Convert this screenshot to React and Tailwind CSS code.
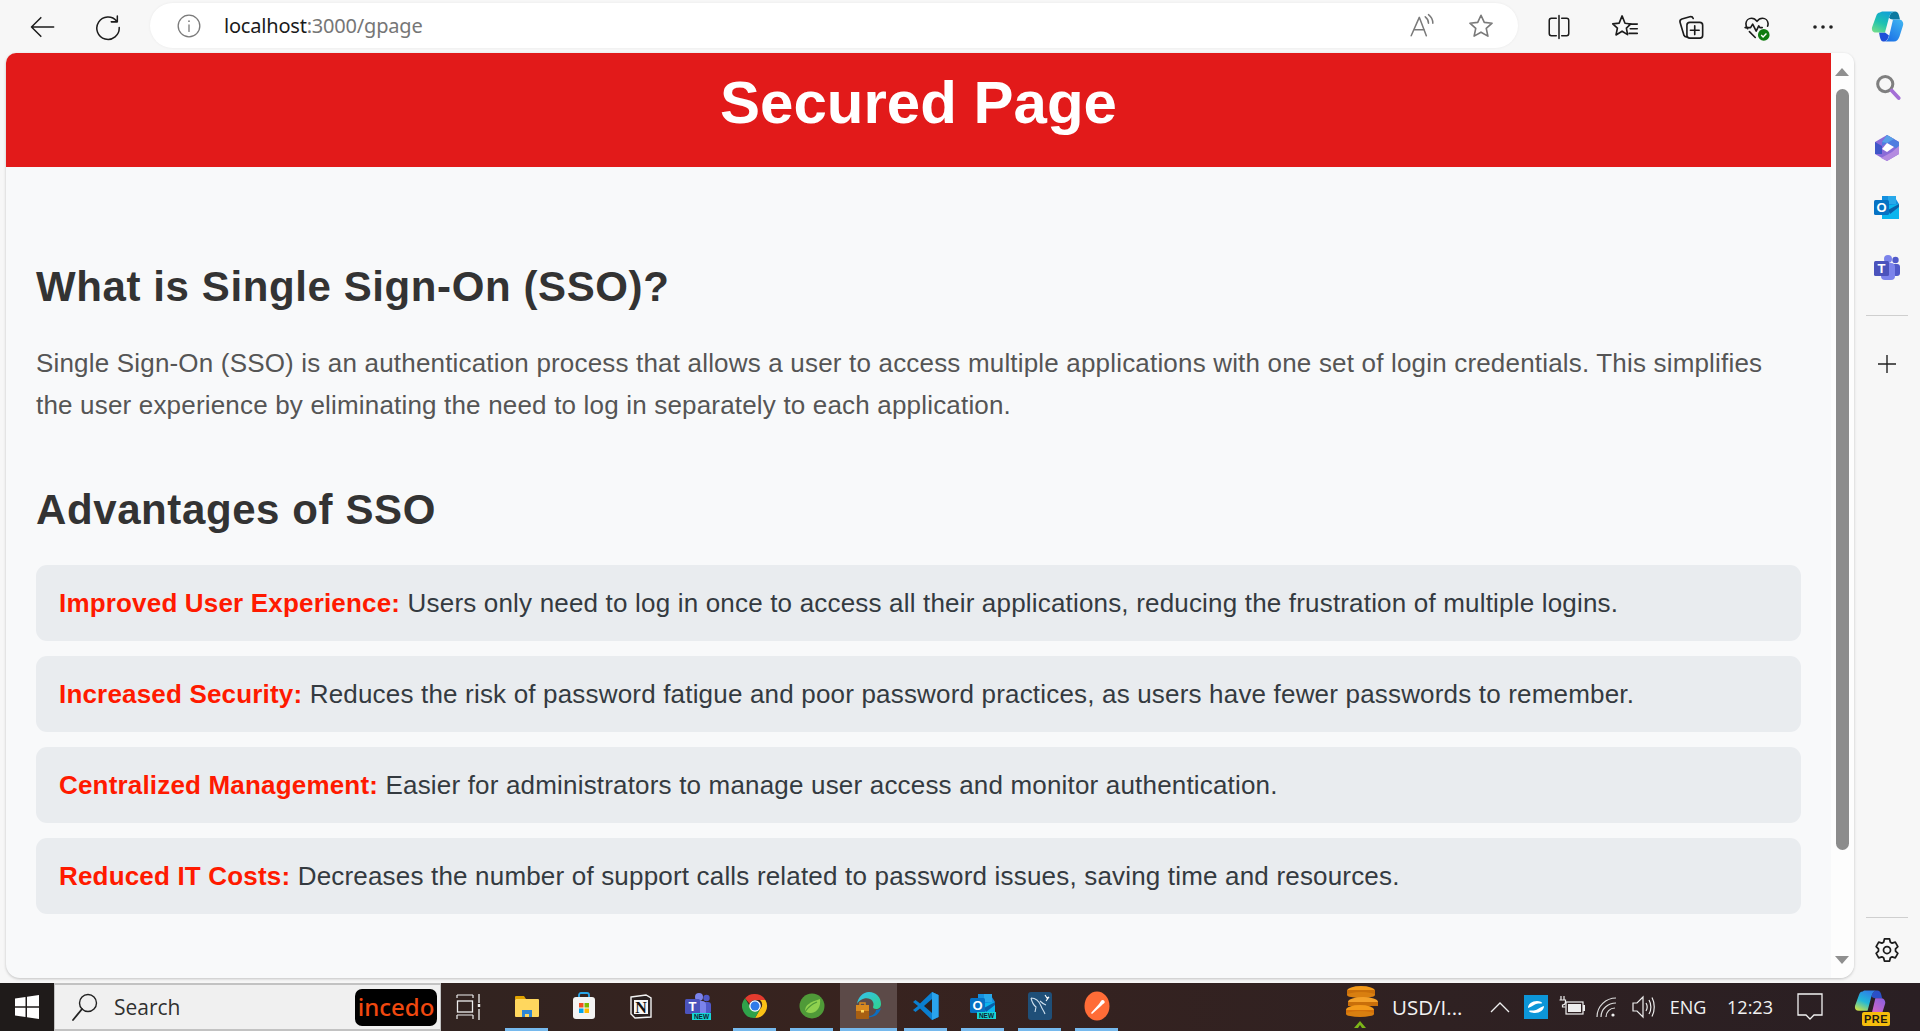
import React from "react";

const Slot = ({ w = "w-[66px]", children }) => (
  <div className={`${w} h-full flex items-center justify-center shrink-0`}>{children}</div>
);

const S = ({ size = 26, vb = 24, children, className = "" }) => (
  <svg width={size} height={size} viewBox={`0 0 ${vb} ${vb}`} fill="none" className={className}>{children}</svg>
);

const ic = { stroke: "#1c1c1c", strokeWidth: 1.4, strokeLinecap: "round", strokeLinejoin: "round" };
const ig = { stroke: "#7a7a7a", strokeWidth: 1.4, strokeLinecap: "round", strokeLinejoin: "round" };

const Back = () => <S size={28}><path d="M22 12H3M11 4l-8 8 8 8" {...ic} strokeWidth={1.3} /></S>;
const Reload = () => <S size={28}><path d="M19.5 7A9.6 9.6 0 1 0 21.6 12.5M20 2.5V7.6h-5.2" {...ic} strokeWidth={1.3} /></S>;
const Info = () => <S size={26}><circle cx="12" cy="12" r="10" {...ig} strokeWidth={1.2} /><path d="M12 11v6" {...ig} strokeWidth={1.2} /><circle cx="12" cy="7.6" r=".8" fill="#7a7a7a" /></S>;
const ReadAloud = () => <S size={26}><path d="M2 21 9.5 4 16 21M4.6 15.5h9.5" {...ig} /><path d="M15 3.5c2 1.5 3 3.6 3 6M18 1.5c2.6 2 4 4.6 4 8" {...ig} /></S>;
const StarI = () => <S size={28}><path d="m12 2.8 2.8 6.1 6.7.7-5 4.5 1.4 6.6L12 17.3l-5.9 3.4 1.4-6.6-5-4.5 6.700-.7z" {...ig} /></S>;
const Split = () => <S size={26}><path d="M9.5 4H5a2 2 0 0 0-2 2v12a2 2 0 0 0 2 2h4.5M14.5 4H19a2 2 0 0 1 2 2v12a2 2 0 0 1-2 2h-4.5M12 1.5v21" {...ic} /></S>;
const Favs = () => <S size={28}><path d="M9.500 2.500 12 8.800l5 .6-3.800 3.600 1 5.500L9.500 15.600 4.300 18.800l1.200-5.800L1.500 9.300l5.500-.6z" {...ic} /><path d="M15.500 9.500h7M16.500 13.500h6M15.500 17.500h7" {...ic} /></S>;
const Coll = () => <S size={28}><path d="M9 20.5H8c-.9 0-1.600-.5-2-1.300L2.600 8c-.3-1.300.4-2.500 1.600-2.900L11 3.200c1.300-.3 2.500.4 2.900 1.500" {...ic} /><rect x="8.5" y="8" width="13.5" height="13.5" rx="2.500" {...ic} /><path d="M15.200 11v7.500M11.500 14.800H19" {...ic} /></S>;
const Health = () => (
  <S size={28}>
    <path d="M4 13.500C2.800 12 2.400 10.500 2.500 9c.2-2.500 2.300-4.500 4.800-4.500 1.900 0 3.500 1 4.700 2.700 1.200-1.700 2.800-2.700 4.700-2.700 2.500 0 4.600 2 4.800 4.500 0 .8 0 1.500-.4 2.300" {...ic} />
    <path d="M1.800 12.500h4.700l1.800-3 3 6 2.200-4.500 1 1.500h2M5.500 16l5 5" {...ic} />
    <circle cx="17.800" cy="18.800" r="5" fill="#107c10" />
    <path d="m15.600 18.900 1.600 1.600 2.900-3" stroke="#fff" strokeWidth="1.200" />
  </S>
);
const Dots = () => <svg width="22" height="6" viewBox="0 0 22 6"><circle cx="3" cy="3" r="1.800" fill="#222" /><circle cx="11" cy="3" r="1.800" fill="#222" /><circle cx="19" cy="3" r="1.800" fill="#222" /></svg>;

const CopilotShape = ({ size, id, left, right, top, bottom }) => (
  <svg width={size} height={size} viewBox="0 0 33 32">
    <defs>
      <linearGradient id={`${id}l`} x1="0.700" y1="0" x2="0.200" y2="1"><stop offset="0" stopColor={left[0]} /><stop offset="0.550" stopColor={left[1]} /><stop offset="1" stopColor={left[2]} /></linearGradient>
      <linearGradient id={`${id}r`} x1="0.900" y1="0" x2="0.200" y2="1"><stop offset="0" stopColor={right[0]} /><stop offset="1" stopColor={right[1]} /></linearGradient>
    </defs>
    <path d="M18 7c1-4 3-6 6-6 2 0 3.500 1.500 4 4l1 4h-7c-2 0-3.500-1-4-2z" fill={top} />
    <path d="M8 22h6l4 3c-1 4-3 6-5 6h-1c-2 0-3-3-4-9z" fill={bottom} />
    <path d="M9 2c1-1 2-1 3-1h12c-3 0-5 2-6 6l-4 15H5c-3 0-4.500-2-4-5L5 6c1-3 2-4 4-4z" fill={`url(#${id}l)`} />
    <path d="M22 9h6c3 0 5 3 4 6l-3.500 11c-1 3-3 5-5.500 5H13c2.500 0 4-2 5-5z" fill={`url(#${id}r)`} />
  </svg>
);

const SearchColor = () => (
  <S size={28}>
    <circle cx="10.5" cy="9.5" r="6.500" stroke="#7f7f7f" strokeWidth="2.600" />
    <path d="m16 15 6 6.500" stroke="#a46fd6" strokeWidth="3.200" strokeLinecap="round" />
  </S>
);
const M365 = () => (
  <svg width="26" height="28" viewBox="0 0 26 28">
    <path d="M13 1 25 8v12l-12 7L1 20V8z" fill="#8b6bd8" />
    <path d="M13 1 25 8v8l-7-4-5-3-5 3V8z" fill="#4f7de0" />
    <path d="M25 12v8l-12 7-6-3 11-6z" fill="#b48be0" />
    <path d="M1 8l7 4v8l-7 0z" fill="#3f56c8" />
    <path d="M13 9l7 4-7 5-5-3z" fill="#fff" />
    <path d="M13 1 20 5l-7 4-5-1z" fill="#5aa0e8" />
  </svg>
);
const OutlookI = ({ isNew = false }) => (
  <svg width="26" height="26" viewBox="0 0 26 26">
    <path d="M8 1h12l5 8-1 15H8z" fill="#1490df" />
    <path d="M14 1h8v8h-8z" fill="#28a8ea" />
    <path d="M8 11 25 9v15H8z" fill="#0ab5ee" />
    <path d="M14 15l11-6v3l-9 7z" fill="#0a5fa8" />
    <rect x="0" y="5" width="15" height="15" rx="1.500" fill="#0672c4" />
    <text x="7.5" y="17" textAnchor="middle" fontFamily="Liberation Sans" fontWeight="700" fontSize="13" fill="#fff">O</text>
    {isNew && <><rect x="7" y="19" width="19" height="7" fill="#16d5d5" /><text x="16.5" y="25" textAnchor="middle" fontFamily="Liberation Sans" fontWeight="700" fontSize="6.5" fill="#123">NEW</text></>}
  </svg>
);
const TeamsI = ({ isNew = false }) => (
  <svg width="26" height="28" viewBox="0 0 26 28">
    <circle cx="21.5" cy="6" r="3.200" fill="#5059c9" />
    <circle cx="14" cy="5" r="4" fill="#7b83eb" />
    <rect x="17" y="10" width="9" height="12" rx="3" fill="#5059c9" />
    <rect x="7" y="9" width="14" height="17" rx="4" fill="#7b83eb" />
    <rect x="0" y="7" width="15" height="15" rx="1.500" fill="#4b53bc" />
    <text x="7.5" y="19" textAnchor="middle" fontFamily="Liberation Sans" fontWeight="700" fontSize="13" fill="#fff">T</text>
    {isNew && <><rect x="7" y="21" width="19" height="7" fill="#16d5d5" /><text x="16.5" y="27" textAnchor="middle" fontFamily="Liberation Sans" fontWeight="700" fontSize="6.5" fill="#123">NEW</text></>}
  </svg>
);
const Gear = () => (
  <S size={28}>
    <path d="M9.800 2.500h4.400l.7 2.800 1.500.8 2.700-.8 2.200 3.800-2 2v1.800l2 2-2.200 3.800-2.700-.8-1.500.8-.7 2.800H9.800l-.7-2.800-1.500-.8-2.700.8-2.200-3.800 2-2v-1.800l-2-2 2.200-3.800 2.700.8 1.500-.8z" {...ic} strokeWidth={1.500} />
    <circle cx="12" cy="12" r="3" {...ic} strokeWidth={1.500} />
  </S>
);

const Toolbar = () => (
  <div className="h-[53px] shrink-0 flex pl-[9px] bg-[#f7f7f7]">
    <Slot><Back /></Slot>
    <Slot><Reload /></Slot>
    <div className="ml-[9px] mt-[3px] w-[1368px] shrink-0 h-[45px] bg-white rounded-full flex items-center shadow-[0_0_3px_rgba(0,0,0,0.06)]">
      <div className="w-[74px] flex justify-end pr-[22px] shrink-0"><Info /></div>
      <div className="text-[20px] leading-[30px] text-[#1a1a1a] font-['Noto_Sans','Open_Sans',sans-serif] tracking-[-0.2px]">
        localhost<span className="text-[#767676]">:3000/gpage</span>
      </div>
      <div className="ml-auto flex h-full pr-[8px]">
        <Slot w="w-[59px]"><ReadAloud /></Slot>
        <Slot w="w-[59px]"><StarI /></Slot>
      </div>
    </div>
    <div className="ml-[8px] flex h-full">
      <Slot><Split /></Slot>
      <Slot><Favs /></Slot>
      <Slot><Coll /></Slot>
      <Slot><Health /></Slot>
      <Slot><Dots /></Slot>
      <Slot w="w-[62px]">
        <CopilotShape size={33} id="c" left={["#0f9fd8", "#1fc2b0", "#6fdc8c"]} right={["#40b4f2", "#1a6fe6"]} top="#0b78a0" bottom="#1f4fd8" />
      </Slot>
    </div>
  </div>
);

const items = [
  ["Improved User Experience:", "Users only need to log in once to access all their applications, reducing the frustration of multiple logins."],
  ["Increased Security:", "Reduces the risk of password fatigue and poor password practices, as users have fewer passwords to remember."],
  ["Centralized Management:", "Easier for administrators to manage user access and monitor authentication."],
  ["Reduced IT Costs:", "Decreases the number of support calls related to password issues, saving time and resources."],
];

const Page = () => (
  <div className="ml-[6px] w-[1848px] h-[925px] flex bg-[#f8f9fa] rounded-tl-[10px] rounded-tr-[10px] rounded-bl-[14px] rounded-br-[14px] shadow-[0_1px_3px_rgba(0,0,0,0.22)] overflow-hidden font-['Liberation_Sans',Arial,sans-serif]">
    <div className="w-[1825px] shrink-0">
      <div className="h-[114px] bg-[#e21a1a] flex items-center justify-center text-white text-[60px] font-bold leading-[70px] pb-[14px]">Secured Page</div>
      <div className="pl-[30px] pr-[30px]">
        <h2 className="mt-[97px] text-[42px] tracking-[0.6px] leading-[46px] font-bold text-[#333333]">What is Single Sign-On (SSO)?</h2>
        <p className="mt-[32px] text-[26px] tracking-[0.18px] leading-[42px] text-[#555555]">
          Single Sign-On (SSO) is an authentication process that allows a user to access multiple applications with one set of login credentials. This simplifies the user experience by eliminating the need to log in separately to each application.
        </p>
        <h2 className="mt-[61px] text-[42px] tracking-[0.6px] leading-[46px] font-bold text-[#333333]">Advantages of SSO</h2>
        <ul className="mt-[32px] flex flex-col gap-[15px]">
          {items.map(([a, b]) => (
            <li key={a} className="h-[76px] rounded-[11px] bg-[#e9ecef] pl-[23px] flex items-center text-[26px] tracking-[0.18px] text-[#343a40]">
              <span className="whitespace-pre"><strong className="text-[#ff1a00] font-bold">{a}</strong> {b}</span>
            </li>
          ))}
        </ul>
      </div>
    </div>
    <div className="flex-1 bg-[#fdfdfd] flex flex-col items-center pt-[15px] pr-[1px]">
      <div className="w-0 h-0 border-x-[7.5px] border-x-transparent border-b-[8px] border-b-[#8f8f8f]" />
      <div className="mt-[13px] w-[13px] h-[761px] rounded-full bg-[#8c8c8c]" />
      <div className="mt-[106px] w-0 h-0 border-x-[7.5px] border-x-transparent border-t-[8px] border-t-[#8f8f8f]" />
    </div>
  </div>
);

const Sidebar = () => (
  <div className="flex-1 flex flex-col items-center">
    <div className="mt-[19px] h-[30px] flex items-center"><SearchColor /></div>
    <div className="mt-[31px] h-[30px] flex items-center"><M365 /></div>
    <div className="mt-[30px] h-[30px] flex items-center"><OutlookI /></div>
    <div className="mt-[30px] h-[30px] flex items-center"><TeamsI /></div>
    <div className="mt-[32px] w-[42px] h-px bg-[#cfcfcf]" />
    <div className="mt-[37px] h-[22px] flex items-center">
      <svg width="20" height="20" viewBox="0 0 20 20"><path d="M10 1v18M1 10h18" stroke="#222" strokeWidth="1.400" /></svg>
    </div>
    <div className="mt-auto w-[42px] h-px bg-[#cfcfcf]" />
    <div className="mt-[17px] mb-[18px] h-[30px] flex items-center"><Gear /></div>
  </div>
);

const TaskIcon = ({ w: width = "w-[57px]", active, mark, children }) => (
  <div className={`${width} h-full shrink-0 flex flex-col items-center ${active ? "bg-[#5c4a48]" : ""}`}>
    <div className="flex-1 flex items-center justify-center pt-[1px]">{children}</div>
    <div className="h-[3px] w-full px-[7px]">
      {mark && <div className={`h-full bg-[#76b9ed] ${active ? "-mx-[7px]" : ""}`} />}
    </div>
  </div>
);

const TaskView = () => (
  <svg width="26" height="28" viewBox="0 0 26 28" fill="none">
    <path d="M1 2h16M17 2v3M1 2v3" stroke="#eee" strokeWidth="1.200" />
    <rect x="1.5" y="8" width="15" height="11" stroke="#eee" strokeWidth="1.300" />
    <path d="M1 22h16M1 22v4M17 22v4" stroke="#eee" strokeWidth="1.200" />
    <path d="M23 1v9M23 16v11" stroke="#eee" strokeWidth="1.300" />
    <rect x="21.800" y="11" width="2.400" height="3" fill="#eee" />
  </svg>
);
const Explorer = () => (
  <svg width="24" height="22" viewBox="0 0 24 22">
    <path d="M0 2a1 1 0 0 1 1-1h8l2 3H0z" fill="#e0a200" />
    <rect x="0" y="4" width="24" height="18" rx="1" fill="#ffd75e" />
    <path d="M7 22v-7h10v7h-3v-3h-4v3z" fill="#2f86d4" />
  </svg>
);
const Store = () => (
  <svg width="24" height="28" viewBox="0 0 24 28">
    <path d="M7 6V3a2 2 0 0 1 2-2h6a2 2 0 0 1 2 2v3" stroke="#2aa5e8" strokeWidth="1.800" fill="none" />
    <rect x="1" y="5" width="22" height="22" rx="3" fill="#f3f3f3" />
    <rect x="7" y="11" width="4.5" height="4.5" fill="#f25022" />
    <rect x="12.5" y="11" width="4.5" height="4.5" fill="#7fba00" />
    <rect x="7" y="16.5" width="4.5" height="4.5" fill="#00a4ef" />
    <rect x="12.5" y="16.5" width="4.5" height="4.5" fill="#ffb900" />
  </svg>
);
const Notion = () => (
  <svg width="24" height="26" viewBox="0 0 24 26">
    <path d="M2 4 17 2l5 3v19l-16 1-4-4z" fill="#2a2020" stroke="#f2f2f2" strokeWidth="1.400" />
    <rect x="5" y="7" width="14" height="14" fill="#f6f6f6" />
    <text x="12" y="20" textAnchor="middle" fontFamily="Liberation Serif" fontWeight="700" fontSize="16" fill="#111">N</text>
  </svg>
);
const Chrome = () => (
  <svg width="26" height="26" viewBox="0 0 26 26">
    <path d="M13 1a12 12 0 0 1 10.400 6H13a6 6 0 0 0-5.500 3.500L3 5.200A12 12 0 0 1 13 1z" fill="#e33b2e" />
    <path d="M23.400 7A12 12 0 0 1 13 25l5-8.700a6 6 0 0 0 0-9.300z" fill="#fbc116" />
    <path d="M3 5.200l5.200 8.800A6 6 0 0 0 18 16.300L13 25A12 12 0 0 1 3 5.200z" fill="#2fa24a" />
    <circle cx="13" cy="13" r="5.800" fill="#fff" /><circle cx="13" cy="13" r="4.500" fill="#2f7be8" />
  </svg>
);
const Spring = () => (
  <svg width="26" height="26" viewBox="0 0 26 26">
    <circle cx="13" cy="13" r="12.500" fill="#4f9a38" />
    <path d="M21 6c1 7-2 13-9 14-3 .3-5-1-6-2 0-6 5-9 15-12z" fill="#8fd14f" />
    <path d="M6 19c3-5 7-8 12-10" stroke="#4f9a38" strokeWidth="1.300" fill="none" />
  </svg>
);
const EdgeW = () => (
  <svg width="26" height="30" viewBox="0 0 26 30">
    <defs><linearGradient id="eg" x1="0" y1="0" x2="1" y2="1"><stop offset="0" stopColor="#35c1f1" /><stop offset="1" stopColor="#2fd28a" /></linearGradient></defs>
    <path d="M13 1c7 0 12 5 12 12 0 3-2 5-5 5-2 0-3-1-3-2 1-2 1-6-3-8-5-2-11 1-13 5C2 6 7 1 13 1z" fill="url(#eg)" />
    <path d="M25 17c-2 7-8 10-14 9 4-1 9-3 9-7 2 0 4-1 5-2z" fill="#0a6fc4" />
    <rect x="0" y="14" width="13" height="14" rx="1" fill="#a85f12" />
    <rect x="0" y="14" width="13" height="6" fill="#d98a1f" />
    <path d="M4 14v-2h5v2" stroke="#d98a1f" strokeWidth="1.500" fill="none" />
    <rect x="5" y="19" width="3" height="2.500" fill="#ffd75e" />
  </svg>
);
const VSCode = () => (
  <svg width="26" height="30" viewBox="0 0 26 30">
    <path d="M19 1 25.500 4v22L19 29 7 17.500l-4.500 3.500L0 19l5-4-5-4 2.500-2L7 12.500z" fill="#0a7fd0" />
    <path d="M19 8v14l-8-7z" fill="#2a2020" />
    <path d="M19 1 25.500 4v22L19 29z" fill="#2aa3ec" />
  </svg>
);
const MySQLI = () => (
  <svg width="24" height="28" viewBox="0 0 24 28">
    <rect x="0" y="0" width="24" height="28" rx="3" fill="#1f4f78" />
    <path d="M3 6c5 0 8 3 10 8 1 3 3 5 4 8M3 6c1 4 2 7 5 9l-1 5M12 9c2 2 3 3 6 4" stroke="#cfe0ee" strokeWidth="1.100" fill="none" />
    <path d="M17 3l2 3 2-1-3 4" stroke="#fff" strokeWidth="1.100" fill="none" />
  </svg>
);
const Postman = () => (
  <svg width="26" height="30" viewBox="0 0 26 30">
    <ellipse cx="13" cy="15" rx="12.5" ry="14.5" fill="#ff6c37" />
    <path d="M7 22l8-9 2 2-9 8zM15 13l2-3a2 2 0 1 1 2 3l-2 2z" fill="#fff" />
  </svg>
);

const Tray = ({ w: width, children }) => <div className={`${width} h-full shrink-0 flex items-center justify-center`}>{children}</div>;

const Coins = () => (
  <svg width="36" height="44" viewBox="0 0 36 44">
    <ellipse cx="17" cy="6" rx="14" ry="5" fill="#f39a1a" />
    <rect x="3" y="5" width="28" height="5" fill="#c96f0a" />
    <ellipse cx="17" cy="10" rx="14" ry="3" fill="#d97f10" />
    <ellipse cx="19" cy="17" rx="15" ry="5" fill="#f4a12a" />
    <rect x="4" y="17" width="30" height="4" fill="#c96f0a" />
    <ellipse cx="16" cy="25" rx="14" ry="5" fill="#f39a1a" />
    <rect x="2" y="25" width="28" height="4" fill="#d2700a" />
    <ellipse cx="16" cy="29" rx="14" ry="3" fill="#d97f10" />
    <path d="M10 43l6-7 6 7h-4l-2-3-2 3z" fill="#7cb518" />
  </svg>
);
const Zscaler = () => (
  <div className="w-[24px] h-[24px] bg-[#0c96d8] flex items-center justify-center">
    <svg width="20" height="14" viewBox="0 0 20 14"><path d="M2 8c0-4 4-7 9-7 3 0 5 1 5 2s-3 0-6 1-4 3-8 4zM18 6c0 4-4 7-9 7-3 0-6-1-6-2s4 0 7-1 4-3 8-4z" fill="#fff" /></svg>
  </div>
);
const Battery = () => (
  <svg width="26" height="24" viewBox="0 0 26 24" fill="none">
    <rect x="7" y="7" width="17" height="12" stroke="#eee" strokeWidth="1.200" />
    <rect x="9" y="9" width="13" height="8" fill="#eee" />
    <rect x="24" y="10" width="2" height="6" fill="#eee" />
    <path d="M2 1v4M5 1v4M0.500 5h6v2c0 2-1.500 3-3 3v2h3" stroke="#eee" strokeWidth="1.200" />
  </svg>
);
const Wifi = () => (
  <svg width="24" height="24" viewBox="0 0 24 24" fill="none">
    <path d="M1 22C1 11 10 3 20 3M5 22C5 14 12 8 20 8M10 22c0-5 4-9 9-9" stroke="#ddd" strokeWidth="1.200" />
    <circle cx="17" cy="20" r="1.600" fill="#eee" />
  </svg>
);
const Speaker = () => (
  <svg width="24" height="24" viewBox="0 0 24 24" fill="none">
    <path d="M2 8h4l6-6v20l-6-6H2z" stroke="#eee" strokeWidth="1.200" />
    <path d="M15 8c1.500 2.500 1.500 5.500 0 8M18 5c2.500 4 2.500 10 0 14M21 2.500c3 5.500 3 13.500 0 19" stroke="#eee" strokeWidth="1.200" />
  </svg>
);
const Notif = () => (
  <svg width="26" height="28" viewBox="0 0 26 28" fill="none">
    <path d="M1 1h24v21h-8l-4 4-4-4H1z" stroke="#f2f2f2" strokeWidth="1.300" />
  </svg>
);
const CopilotPre = () => (
  <div className="relative w-[32px] h-[36px]">
    <CopilotShape size={32} id="p" left={["#2f7be8", "#22b8d8", "#c8e04a"]} right={["#8a5fe0", "#f06ab8"]} top="#2a50c8" bottom="#1a1420" />
    <div className="absolute left-[8px] bottom-[-1px] h-[14px] px-[2px] rounded-[2px] bg-[#f5bd0c] text-[#201a10] text-[11px] leading-[14px] font-bold tracking-[0.5px] font-['Liberation_Sans',sans-serif]">PRE</div>
  </div>
);

const Taskbar = () => (
  <div className="h-[48px] shrink-0 flex bg-[linear-gradient(90deg,#2a2321_0%,#38231f_45%,#2f2122_75%,#2a1f23_100%)] font-['Open_Sans','Noto_Sans',sans-serif] text-[#f2f2f2]">
    <div className="w-[54px] h-full bg-[#1f1b1a] flex items-center justify-center shrink-0">
      <svg width="26" height="26" viewBox="0 0 26 26"><path d="M1 4.500 11.500 3v9.300H1zM13 2.800 25 1v11.300H13zM1 13.800h10.500V23L1 21.500zM13 13.800h12V25l-12-1.800z" fill="#fff" /></svg>
    </div>
    <div className="w-[387px] h-full shrink-0 bg-[#f0f0f0] border-y-[2px] border-x border-[#c2c2c2] flex items-center pl-[15px] pr-[3px]">
      <svg width="30" height="30" viewBox="0 0 30 30" fill="none"><circle cx="18" cy="11" r="8.500" stroke="#222" strokeWidth="1.400" /><path d="M12 17 3 28" stroke="#222" strokeWidth="1.800" strokeLinecap="round" /></svg>
      <span className="ml-[14px] text-[21px] leading-[28px] text-[#303030]">Search</span>
      <div className="ml-auto w-[82px] h-[37px] rounded-[7px] bg-black flex items-center justify-center text-[#f0480f] text-[24px] leading-[30px] font-medium font-['Noto_Sans',sans-serif]">incedo</div>
    </div>
    <Slot w="w-[55px]"><TaskView /></Slot>
    <div className="ml-[2px] flex h-full">
      <TaskIcon mark><Explorer /></TaskIcon>
      <TaskIcon><Store /></TaskIcon>
      <TaskIcon><Notion /></TaskIcon>
      <TaskIcon><TeamsI isNew /></TaskIcon>
      <TaskIcon mark><Chrome /></TaskIcon>
      <TaskIcon mark><Spring /></TaskIcon>
      <TaskIcon mark active><EdgeW /></TaskIcon>
      <TaskIcon mark><VSCode /></TaskIcon>
      <TaskIcon mark><OutlookI isNew /></TaskIcon>
      <TaskIcon mark><MySQLI /></TaskIcon>
      <TaskIcon mark><Postman /></TaskIcon>
    </div>
    <div className="ml-auto flex h-full items-center pr-[15px]">
      <Tray w="w-[52px]"><Coins /></Tray>
      <div className="w-[94px] text-[20.5px] leading-[28px] pl-[4px] whitespace-nowrap">USD/I...</div>
      <Tray w="w-[36px]"><svg width="20" height="12" viewBox="0 0 20 12" fill="none"><path d="M1 11 10 2l9 9" stroke="#eee" strokeWidth="1.300" /></svg></Tray>
      <Tray w="w-[36px]"><Zscaler /></Tray>
      <Tray w="w-[36px]"><Battery /></Tray>
      <Tray w="w-[35px]"><Wifi /></Tray>
      <Tray w="w-[36px]"><Speaker /></Tray>
      <Tray w="w-[54px]"><span className="text-[18px]">ENG</span></Tray>
      <Tray w="w-[70px]"><span className="text-[18px]">12:23</span></Tray>
      <Tray w="w-[50px]"><Notif /></Tray>
      <Tray w="w-[70px]"><CopilotPre /></Tray>
    </div>
  </div>
);

export default function App() {
  return (
    <div className="w-full h-screen flex flex-col overflow-hidden bg-[#f7f7f7]">
      <Toolbar />
      <div className="flex-1 flex min-h-0">
        <Page />
        <Sidebar />
      </div>
      <Taskbar />
    </div>
  );
}
